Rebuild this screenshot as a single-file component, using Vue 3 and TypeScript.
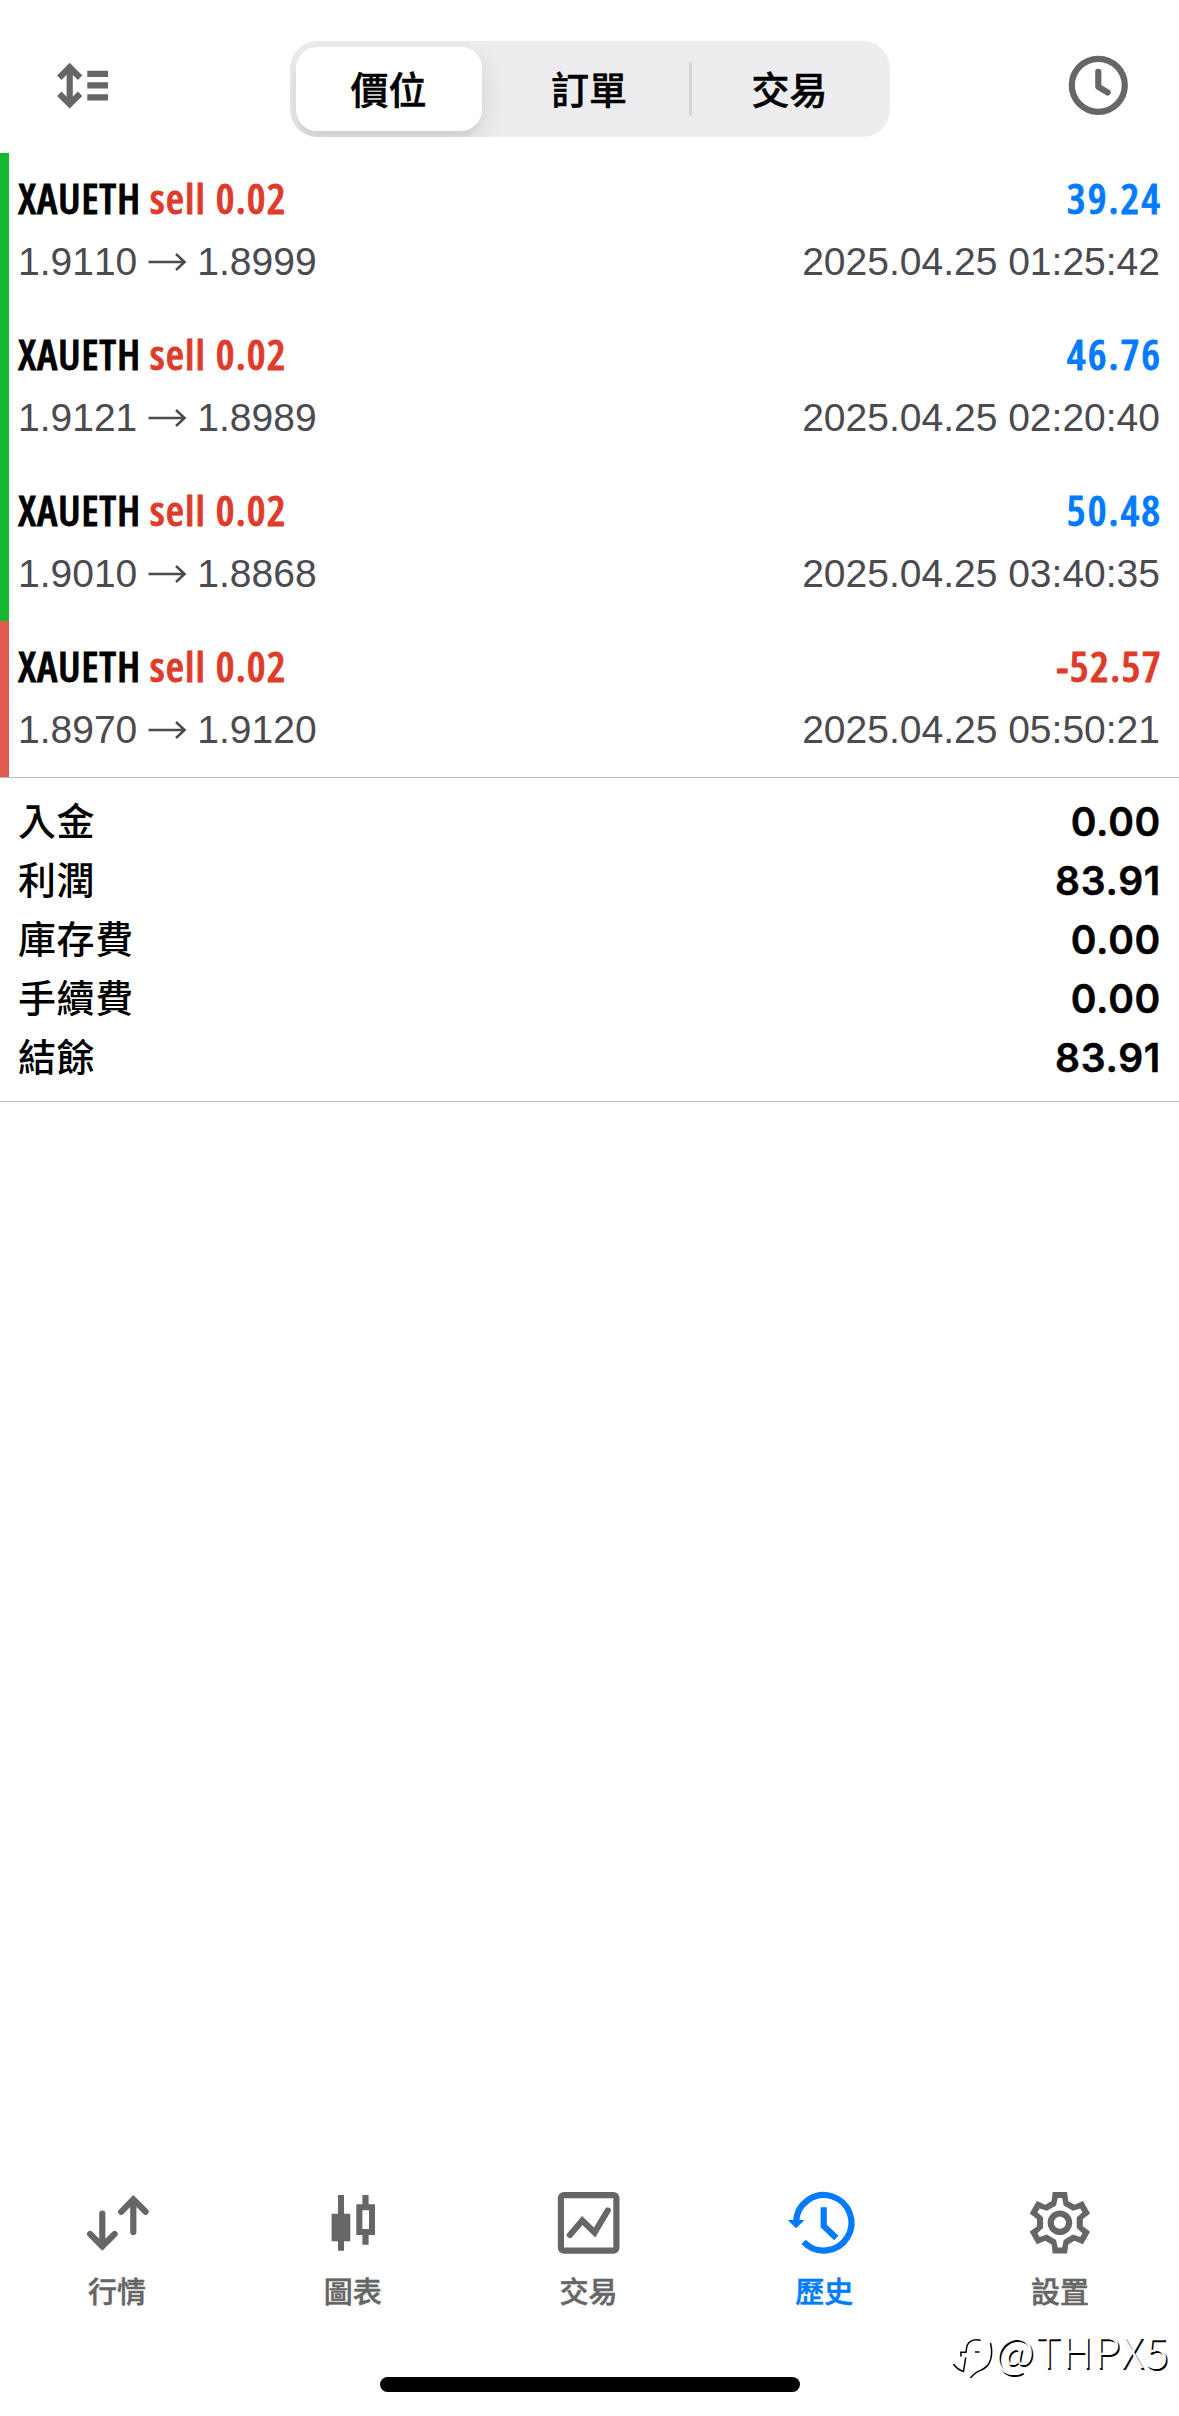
<script setup lang="ts">
interface Deal { symbol: string; side: string; open: string; close: string; profit: string; time: string; loss?: boolean }

const segments = ['價位', '訂單', '交易']

const deals: Deal[] = [
  { symbol: 'XAUETH', side: 'sell 0.02', open: '1.9110', close: '1.8999', profit: '39.24', time: '2025.04.25 01:25:42' },
  { symbol: 'XAUETH', side: 'sell 0.02', open: '1.9121', close: '1.8989', profit: '46.76', time: '2025.04.25 02:20:40' },
  { symbol: 'XAUETH', side: 'sell 0.02', open: '1.9010', close: '1.8868', profit: '50.48', time: '2025.04.25 03:40:35' },
  { symbol: 'XAUETH', side: 'sell 0.02', open: '1.8970', close: '1.9120', profit: '-52.57', time: '2025.04.25 05:50:21', loss: true },
]

const totals = [
  { label: '入金', value: '0.00' },
  { label: '利潤', value: '83.91' },
  { label: '庫存費', value: '0.00' },
  { label: '手續費', value: '0.00' },
  { label: '結餘', value: '83.91' },
]

const tabs = [
  { id: 'quotes', label: '行情' },
  { id: 'charts', label: '圖表' },
  { id: 'trade', label: '交易' },
  { id: 'history', label: '歷史' },
  { id: 'settings', label: '設置' },
]
const activeTab = 'history'

// Repeats one gear tooth six times around the icon centre.
function ring(points: [number, number][]): string {
  const out: string[] = []
  for (let i = 0; i < 6; i++) {
    const a = (i * Math.PI) / 3
    for (const [x, y] of points) {
      const px = 38.9 + x * Math.cos(a) - y * Math.sin(a)
      const py = 39.7 + x * Math.sin(a) + y * Math.cos(a)
      out.push(`${px.toFixed(2)} ${py.toFixed(2)}`)
    }
  }
  return `M${out.join('L')}Z`
}
const gear =
  ring([[-8.3, -21.7], [-7.2, -30.7], [7.2, -30.7], [8.3, -21.7]]) +
  ring([[-3.8, -17.2], [-2.2, -24.7], [2.2, -24.7], [3.8, -17.2]])
</script>

<template>
  <div class="screen">
    <header class="top">
      <svg class="sort" viewBox="0 0 64 60" fill="none" stroke="#666" stroke-width="6.2">
        <path d="M19.7 11v37.4M9.3 21.7 19.7 11.2l10.4 10.5M9.3 37.7l10.4 10.5 10.4-10.5" />
        <path d="M37.3 17.9H58M37.3 29.3H58M37.3 41.3H58" />
      </svg>
      <div class="segmented">
        <span v-for="(s, i) in segments" :key="s" class="segment" :class="{ on: i === 0, ruled: i === 1, last: i === 2 }">{{ s }}</span>
      </div>
      <svg class="clock" viewBox="0 0 64 64" fill="none" stroke="#666" stroke-width="6.2">
        <circle cx="32.3" cy="32.3" r="26.5" />
        <path d="M32.3 18.8v15l9.3 5.6" stroke-linecap="round" stroke-linejoin="round" />
      </svg>
    </header>

    <main class="body">
      <section class="deals">
        <article v-for="d in deals" :key="d.time" class="deal" :class="{ loss: d.loss }">
          <div class="line main">
            <span class="cond"><b class="symbol">{{ d.symbol }}</b> <b class="sell">{{ d.side }}</b></span>
            <b class="cond profit">{{ d.profit }}</b>
          </div>
          <div class="line detail">
            <span class="prices">{{ d.open }}<svg class="arrow" viewBox="0 0 60 24" fill="none" stroke="#4b4a50" stroke-width="2.4"><path d="M11.5 12h36M39 4l8.6 8-8.6 8" /></svg>{{ d.close }}</span>
            <time>{{ d.time }}</time>
          </div>
        </article>
      </section>
      <section class="totals">
        <div v-for="t in totals" :key="t.label" class="total">
          <span>{{ t.label }}</span><b>{{ t.value }}</b>
        </div>
      </section>
    </main>

    <nav class="tabs">
      <div v-for="t in tabs" :key="t.id" class="tab" :class="{ active: t.id === activeTab }">
        <svg viewBox="0 0 80 80" fill="none" stroke="currentColor" stroke-width="6.2">
          <path v-if="t.id === 'quotes'" stroke-linecap="round" d="M24.3 30.5V61M12.1 51l12.2 12.3L36.6 51M55.3 49V18M43.2 28.8l12.1-12.4 12.3 12.4" />
          <path v-else-if="t.id === 'charts'" fill="currentColor" stroke="none" fill-rule="evenodd" d="M24 12h6v18.7h6.3v27.6H30v9.4h-6v-9.4h-6.4V30.7H24ZM48.4 12h6.2v9.3H61V52h-6.4v9.7h-6.2V52h-6.1V21.3h6.1ZM48.4 27.3V46H55V27.3Z" />
          <template v-else-if="t.id === 'trade'">
            <rect x="11.9" y="12.1" width="55.5" height="55.5" rx="3" />
            <path stroke-linecap="round" d="M20.9 52l12.4-14.4 12.3 11.9 13.1-22" />
          </template>
          <template v-else-if="t.id === 'history'">
            <path d="M11.1 38.5A27.7 27.7 0 1 1 18.6 58.8M38.7 24.3v18.6l12.6 12" />
            <path fill="currentColor" stroke="none" d="M2.7 37h16.8l-8.4 8.2Z" />
          </template>
          <template v-else>
            <path fill="currentColor" stroke="none" fill-rule="evenodd" :d="gear" />
            <circle cx="38.9" cy="39.7" r="9.2" />
          </template>
        </svg>
        <span>{{ t.label }}</span>
      </div>
    </nav>

    <div class="home"></div>

    <div class="mark">
      <svg viewBox="0 0 44 54" fill="none" stroke="#000" stroke-width="1.5">
        <path d="M29.7 11.3C21 9.5 16 13 15.5 19.5L15 23.3H9.9V27.5M24 23h4.5" />
        <path d="M39.5 14C41 20 41.5 28 38 34.5 33 43 26 39.5 19.5 49M14.7 28.5 12.5 42.5Q6 40.5 2.5 35" />
      </svg>
      <span>@THPX5</span>
    </div>
  </div>
</template>

<style>
body { margin: 0; background: #fff; }
</style>

<style scoped>
.screen {
  position: relative;
  display: flex;
  flex-direction: column;
  width: 1179px;
  height: 2416px;
  overflow: hidden;
  background: #fff;
  color: #000;
  font-family: "Liberation Sans", "Noto Sans CJK TC", sans-serif;
}
.top {
  box-sizing: border-box;
  display: flex;
  justify-content: space-between;
  align-items: flex-start;
  height: 153px;
  padding: 41px 49px 0 50px;
}
.sort { width: 64px; height: 60px; margin-top: 15px; }
.clock { width: 64px; height: 64px; margin-top: 12px; }
.segmented {
  box-sizing: border-box;
  display: flex;
  width: 600px;
  height: 96px;
  padding: 6px;
  margin-left: -1px;
  border-radius: 27px;
  background: #ededef;
  overflow: hidden;
}
.segment {
  position: relative;
  box-sizing: border-box;
  flex: none;
  width: 201px;
  height: 84px;
  line-height: 81px;
  text-align: center;
  font-family: "Noto Sans CJK TC", sans-serif;
  font-size: 38px;
  font-weight: 500;
  -webkit-text-stroke: .5px #000;
}
.segment.on {
  width: 186px;
  margin-right: 7px;
  border-radius: 21px;
  background: #fff;
  box-shadow: 0 9px 24px rgba(0, 0, 0, .12), 0 6px 3px rgba(0, 0, 0, .03);
}
.segment.last { width: 194px; padding-left: 6px; }
.ruled::after {
  content: "";
  position: absolute;
  right: -2px;
  top: 15px;
  width: 3px;
  height: 54px;
  border-radius: 2px;
  background: #d6d6d9;
}
.deal {
  box-sizing: border-box;
  height: 156px;
  padding: 17px 18px 0 9px;
  border-left: 9px solid #16b82f;
}
.deal.loss { border-left-color: #e05c50; }
.line { display: flex; justify-content: space-between; }
.main { height: 59px; line-height: 55px; font-size: 42px; }
.cond {
  font-family: "Open Sans", sans-serif;
  font-weight: 600;
  font-stretch: 75%;
  white-space: nowrap;
  word-spacing: 1px;
  -webkit-text-stroke: .8px currentColor;
}
.cond b { font-weight: 600; }
.symbol { letter-spacing: .7px; }
.sell { color: #de3b2b; letter-spacing: 1.1px; }
.profit { color: #007aff; letter-spacing: 2px; margin-right: -1px; }
.loss .profit { color: #de3b2b; letter-spacing: 1.4px; }
.detail { height: 66px; line-height: 66px; font-size: 39px; color: #4b4a50; font-kerning: none; }
.detail time { margin-right: 1px; }
.prices { display: flex; align-items: center; }
.arrow { width: 60px; height: 24px; }
.totals {
  box-sizing: border-box;
  height: 325px;
  padding: 14px 18px 0;
  border-top: 1px solid #bcbcbe;
  border-bottom: 1px solid #bcbcbe;
}
.total {
  display: flex;
  justify-content: space-between;
  height: 59px;
  line-height: 59px;
  font-size: 39px;
}
.total span {
  font-family: "Noto Sans CJK TC", sans-serif;
  font-weight: 500;
  font-size: 38px;
  letter-spacing: .6px;
  line-height: 54px;
}
.total b {
  font-family: Inter, sans-serif;
  font-weight: 600;
  letter-spacing: .7px;
  -webkit-text-stroke: .5px #000;
}
.body { height: 2030px; }
.tabs { display: flex; height: 180px; }
.tab {
  display: flex;
  flex: 1;
  flex-direction: column;
  align-items: center;
  color: #666;
}
.tab svg { width: 80px; height: 80px; }
.tab span {
  font-family: "Noto Sans CJK TC", sans-serif;
  font-weight: 500;
  font-size: 29px;
  line-height: 40px;
  margin: 7px 2px 0 0;
  -webkit-text-stroke: .5px currentColor;
}
.tab.active { color: #007aff; }
.home {
  width: 420px;
  height: 15px;
  margin: 14px auto 0;
  border-radius: 8px;
  background: #000;
}
.mark {
  position: absolute;
  left: 951px;
  top: 2329px;
  display: flex;
  align-items: flex-start;
  color: #fff;
  font-family: "Noto Sans CJK SC", sans-serif;
  font-size: 43px;
  font-weight: 300;
  line-height: 41px;
  letter-spacing: 1.4px;
  text-shadow: 1.5px 1.5px 0 #000;
}
.mark svg { width: 44px; height: 54px; }
</style>
